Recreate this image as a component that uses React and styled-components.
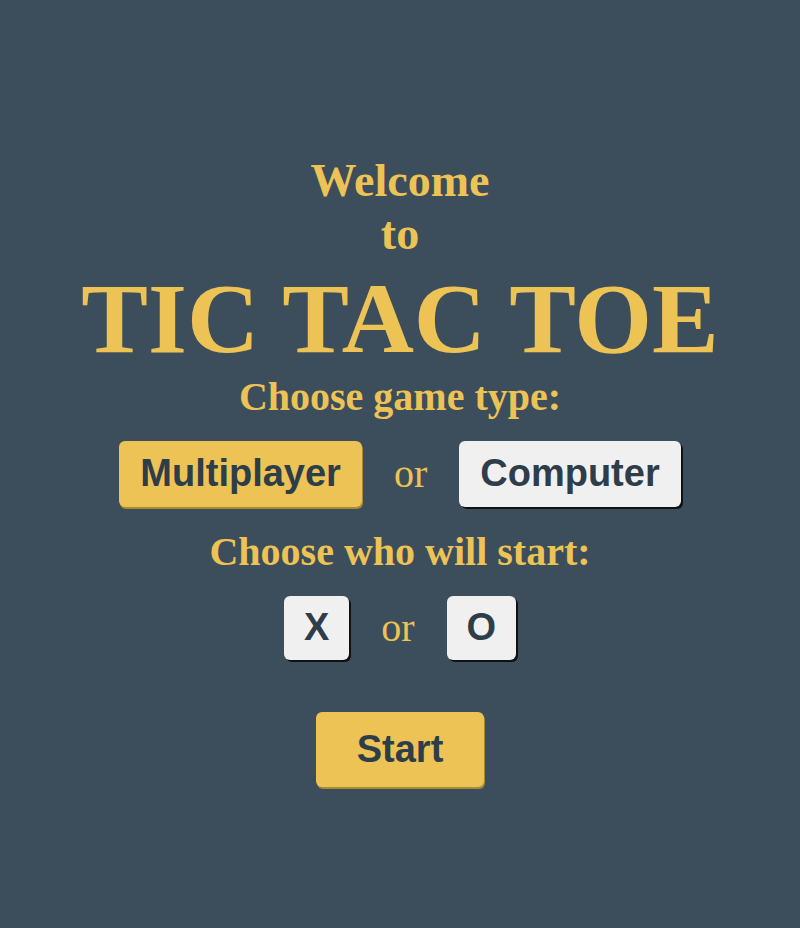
import React, { useState } from 'react'
import styled, { createGlobalStyle } from 'styled-components'

const GlobalStyle = createGlobalStyle`
  html, body {
    margin: 0;
    padding: 0;
    background: #3c4e5c;
  }
`

const Screen = styled.main`
  min-height: 100vh;
  box-sizing: border-box;
  padding-top: 12px;
  display: flex;
  flex-direction: column;
  align-items: center;
  justify-content: center;
  font-family: 'Liberation Serif', 'Times New Roman', serif;
  color: #ecc354;
  text-align: center;
`

const Welcome = styled.h2`
  margin: 0;
  font-size: 46px;
  font-weight: 700;
  line-height: 53px;
`

const Title = styled.h1`
  margin: 4px 0 1px;
  font-size: 100px;
  font-weight: 700;
  line-height: 110px;
`

const Label = styled.h3`
  margin: 0;
  font-size: 40px;
  font-weight: 700;
  line-height: 44px;
`

const Row = styled.div`
  display: flex;
  align-items: center;
  gap: 32px;
  margin: 22px 0 23px;
`

const Or = styled.span`
  font-size: 40px;
  font-weight: 400;
`

const Choice = styled.button`
  font-family: 'Liberation Sans', Arial, sans-serif;
  font-size: 38px;
  font-weight: 700;
  color: #2e3d4a;
  height: ${(props) => props.h || 66}px;
  padding: 0 ${(props) => props.pad || 21}px;
  border-radius: 6px;
  border: none;
  cursor: pointer;
  background: ${(props) => (props.active ? '#ecc354' : '#f0f0f0')};
  box-shadow: ${(props) =>
    props.active ? '1px 2px 0 #a88a34' : '2px 2px 0 #111'};
`

const StartButton = styled(Choice)`
  height: 75px;
  width: 168px;
  margin-top: 29px;
`

function App() {
  const [mode, setMode] = useState('multi')
  const [first, setFirst] = useState(null)

  return (
    <>
      <GlobalStyle />
      <Screen>
        <Welcome>
          Welcome
          <br />
          to
        </Welcome>
        <Title>TIC TAC TOE</Title>
        <Label>Choose game type:</Label>
        <Row>
          <Choice active={mode === 'multi'} onClick={() => setMode('multi')}>
            Multiplayer
          </Choice>
          <Or>or</Or>
          <Choice active={mode === 'cpu'} onClick={() => setMode('cpu')}>
            Computer
          </Choice>
        </Row>
        <Label>Choose who will start:</Label>
        <Row>
          <Choice h={64} pad={20} active={first === 'X'} onClick={() => setFirst('X')}>
            X
          </Choice>
          <Or>or</Or>
          <Choice h={64} pad={20} active={first === 'O'} onClick={() => setFirst('O')}>
            O
          </Choice>
        </Row>
        <StartButton active>Start</StartButton>
      </Screen>
    </>
  )
}

export default App
